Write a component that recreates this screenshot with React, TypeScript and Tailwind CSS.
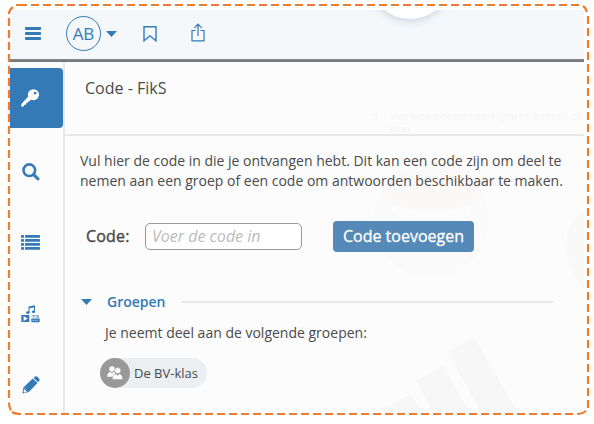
import React from 'react';

const BarsIcon = () => (
  <svg className="w-4 h-[13px]" viewBox="0 0 16 13" fill="currentColor">
    <rect width="16" height="3" rx="0.8" />
    <rect y="5" width="16" height="3" rx="0.8" />
    <rect y="10" width="16" height="3" rx="0.8" />
  </svg>
);

const BookmarkIcon = () => (
  <svg className="w-[14px] h-4" viewBox="0 0 14 16" fill="none" stroke="currentColor" strokeWidth="1.4">
    <path d="M1 .8h12v14l-6-5-6 5z" />
  </svg>
);

const ShareIcon = () => (
  <svg className="w-[14px] h-[19px]" viewBox="0 0 14 19" fill="none" stroke="currentColor" strokeWidth="1.2">
    <path d="M4.5 7.5H1v10.3h12V7.5H9.5M7 13V1.2M3.4 4.8 7 1.2l3.6 3.6" />
  </svg>
);

const KeyIcon = () => (
  <svg className="w-[18px] h-[18px]" viewBox="0 0 18 18" fill="currentColor">
    <path
      fillRule="evenodd"
      d="M12.2.2a5.5 5.5 0 1 1-1.7 10.6l-1.6.6-.7 1.2-1.2.2-.5 1.3-1.3.2-.5 1.4-1.4.2-.5 1.4-2.2.6L.2 15.2 7.2 7.6A5.5 5.5 0 0 1 12.2.2zm1.8 2.6a1.4 1.4 0 1 0 .1 2.8 1.4 1.4 0 0 0-.1-2.8z"
    />
  </svg>
);

const SearchIcon = () => (
  <svg className="w-[18px] h-[18px]" viewBox="0 0 18 18" fill="none" stroke="currentColor">
    <circle cx="7.3" cy="7.2" r="5.8" strokeWidth="2.6" />
    <path d="M11.6 11.6 16 15.8" strokeWidth="3" strokeLinecap="round" />
  </svg>
);

const ListIcon = () => (
  <svg className="w-[19px] h-[15px]" viewBox="0 0 19 15" fill="currentColor">
    {[0, 4, 8, 12].map((y) => (
      <g key={y}>
        <rect y={y} width="3" height="2.8" rx="0.4" />
        <rect x="4" y={y} width="15" height="2.8" rx="0.4" />
      </g>
    ))}
  </svg>
);

const MediaIcon = () => (
  <svg className="w-[19px] h-[18px]" viewBox="0 0 19 18" fill="currentColor">
    <path d="M7.5 1.5 14 .3v6.2h-1V2.4l-4.5.9v4.2h-1z" />
    <ellipse cx="6.9" cy="7.6" rx="1.7" ry="1.3" />
    <ellipse cx="12.5" cy="6.7" rx="1.7" ry="1.3" />
    <path fillRule="evenodd" d="M.3 10h8v7h-8zm2.3 1.2v4.7l4.3-2.4z" />
    <path d="M11 10h3v1h-1v2h-1v-2h-1zM14.6 10h.9v3h-.9zM16 10h2v1h-1v.6h1V13h-2v-.8h1v-.3h-1z" opacity="0.65" />
    <rect x="10.3" y="13.4" width="8.4" height="3.8" rx="0.8" />
    <path d="M11.5 15.3h6" stroke="#fcfcfc" strokeWidth="0.7" strokeDasharray="1.2 .8" />
  </svg>
);

const PencilIcon = () => (
  <svg className="w-[18px] h-[18px]" viewBox="0 0 18 18" fill="currentColor">
    <path d="M11.6 1.9 12.7.8c.8-.8 1.9-.8 2.7 0l1.6 1.6c.8.8.8 1.9 0 2.7l-1.1 1.1z" />
    <path d="m10.8 2.4 4.7 4.7-8.7 8.8-4.9-4.9z" />
    <path fillRule="evenodd" d="M1.6 10.7 7 16.1.4 17.6zm.6 2.3-.6 2.7.8.8 2.6-.6z" />
    <path d="m11.1 2.1 4.5 4.6" stroke="#fcfcfc" strokeWidth="0.6" />
  </svg>
);

const GroupIcon = () => (
  <svg className="w-4 h-[14px]" viewBox="0 0 16 14" fill="#fff">
    <circle cx="5" cy="3" r="2.7" />
    <path d="M.2 10.2c0-2.7 1.5-4 3.3-4.2L5 7.3 6.4 6l1.6.6v4.2H.2z" />
    <g stroke="#999" strokeWidth="0.5">
      <circle cx="10.7" cy="4.6" r="3" />
      <path d="M5.4 13.4c0-3.4 1.4-5 3.7-5.5l1.6 1.6 1.6-1.6c2.3.5 3.5 2.1 3.5 5.5z" />
    </g>
  </svg>
);

const Caret = () => (
  <svg className="w-[11px] h-[6px]" viewBox="0 0 11 6" fill="currentColor">
    <path d="M0 0h11L5.5 6z" />
  </svg>
);

// Faded page behind the side panel
const Backdrop = () => (
  <svg className="absolute inset-0 w-[574px] h-[403px] pointer-events-none" viewBox="10 10 574 403">
    <circle cx="431" cy="220" r="57" fill="#fafafa" />
    <path d="M390 205c2-25 20-36 42-36s40 12 41 36c-26 5-57 5-83 0z" fill="#fbf9f8" />
    <path d="M390 204c28 11 58 11 83 0-7 20-19 28-42 22-21 2-35-4-41-22z" fill="#fcfcfc" />
    <path d="M584 211c-12 7-18 18-18 34s7 33 18 45z" fill="#f9f9f9" />
    <g fill="#f7f7f7">
      <path d="M447 352l27-15 44 76h-36zM416 381l27-15 27 47h-36zM384 409l27-15 11 19h-38z" />
    </g>
    <g fontFamily="Inter, sans-serif" fontSize="9.6" fontWeight="600" fill="#f7f7f7">
      <text x="372" y="120">3</text>
      <text x="390" y="120" textLength="192">Van welke ondernemingen of merken zij</text>
      <text x="390" y="133">logo.</text>
    </g>
  </svg>
);

const DashedFrame = () => (
  <svg
    className="absolute inset-0 w-[594px] h-[424px] pointer-events-none"
    viewBox="0 0 594 424"
    fill="none"
    stroke="#ed7d31"
    strokeWidth="2.2"
    strokeDasharray="8 4"
  >
    <path d="M19 5H580" />
    <path d="M588 16V408" />
    <path d="M25 414H574" />
    <path d="M9 18V400" />
    <path strokeDasharray="none" d="M9 14q0-4 4-7M16 5H20M583 6q3 2 4 6M577 414q7-.5 9-3.5M9 402.5q0 5 2 8M12 412q3 2 9 2" />
  </svg>
);

const App: React.FC = () => {
  return (
    <div
      className="relative w-[594px] h-[424px] overflow-hidden bg-white pl-[10px] pt-[10px] text-[#4a4a4a]"
      style={{ fontFamily: '"Open Sans", sans-serif' }}
    >
      <div className="relative flex flex-col w-[574px] h-[403px] overflow-hidden bg-[#fcfcfc]">
        <Backdrop />

        {/* Toolbar */}
        <header className="relative flex items-center h-[49px] shrink-0 bg-[#f4f8fb] pb-[2px] pl-[15px] text-[#337ab7]">
          <BarsIcon />
          <div className="ml-[25px] flex h-[35px] w-[35px] items-center justify-center rounded-full border border-[#337ab7] text-[17px]">
            AB
          </div>
          <div className="ml-[5px]"><Caret /></div>
          <div className="ml-[26px]"><BookmarkIcon /></div>
          <div className="ml-[34px] pb-[2px]"><ShareIcon /></div>
          <div className="absolute left-[359px] -top-[73px] h-[82px] w-[82px] rounded-full bg-white shadow-[0_2px_9px_rgba(50,80,100,0.22)]" />
        </header>
        <div className="relative h-[3px] shrink-0 bg-gradient-to-b from-[#888] to-[#747474]" />

        <div className="relative flex flex-1">
          <nav className="flex w-[53px] shrink-0 flex-col pt-[6px] text-[#337ab7]">
            <div className="flex h-[60px] items-center rounded-r bg-[#337ab7] pl-[11px] text-white">
              <KeyIcon />
            </div>
            <div className="mt-[35px] pl-[12px]"><SearchIcon /></div>
            <div className="mt-[54px] pl-[11px]"><ListIcon /></div>
            <div className="mt-[55px] pl-[11px]"><MediaIcon /></div>
            <div className="mt-[53px] pl-[12px]"><PencilIcon /></div>
          </nav>

          <main className="flex-1 border-l-2 border-[#e9e9e9]">
            <h1 className="h-[74px] border-b-2 border-[#e9e9e9] pl-[20px] pt-[14px] text-base leading-6">Code - FikS</h1>
            <p className="whitespace-nowrap pl-[15px] pt-[15px] text-[14px] leading-5">
              Vul hier de code in die je ontvangen hebt. Dit kan een code zijn om deel te
              <br />
              nemen aan een groep of een code om antwoorden beschikbaar te maken.
            </p>

            <div className="mt-[30px] flex items-center pl-[21px] text-base">
              <label className="w-[59px] pb-[2px] font-medium tracking-[0.2px] [-webkit-text-stroke:0.4px]">Code:</label>
              <input
                className="h-[27px] w-[157px] rounded-[5px] border border-[#999] bg-white px-[6px] pb-[2px] italic placeholder:text-[#bbb]"
                placeholder="Voer de code in"
              />
              <button className="ml-[31px] h-[31px] w-[141px] whitespace-nowrap rounded bg-[#5589b7] pb-[2px] font-medium text-white [-webkit-text-stroke:0.3px]">
                Code toevoegen
              </button>
            </div>

            <div className="mt-[40px] flex items-center pl-[16px] text-[14px] font-semibold leading-5 text-[#337ab7]">
              <Caret />
              <span className="ml-[15px]">Groepen</span>
              <span className="ml-[15px] h-[2px] w-[372px] bg-[#e9e9e9]" />
            </div>
            <p className="mt-[11px] pl-[40px] text-[14px] leading-5">Je neemt deel aan de volgende groepen:</p>
            <div className="ml-[35px] mt-[15px] flex h-[30px] w-[107px] items-center rounded-full bg-[#ebeff2]">
              <span className="flex h-[30px] w-[30px] items-center justify-center rounded-full bg-[#999]">
                <GroupIcon />
              </span>
              <span className="ml-1 whitespace-nowrap pt-[2px] text-[13px]">De BV-klas</span>
            </div>
          </main>
        </div>
      </div>
      <DashedFrame />
    </div>
  );
};

export default App;
